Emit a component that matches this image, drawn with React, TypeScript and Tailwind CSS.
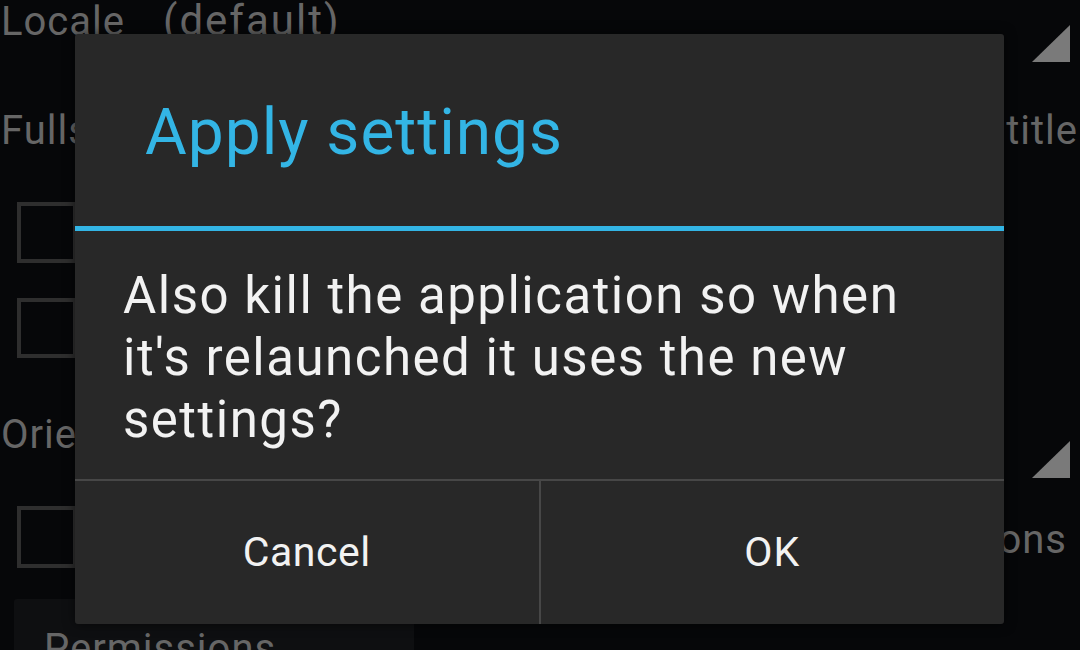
import { useState } from "react";

function Spinner({ className = "" }: { className?: string }) {
  return (
    <svg className={className} width="38" height="37" viewBox="0 0 38 37">
      <path d="M38 0V37H0z" fill="#7a7a7a" />
    </svg>
  );
}

function Box({ className = "" }: { className?: string }) {
  return <div className={`ml-[17px] w-[60px] border-[4px] border-[#2e2e2e] ${className}`} />;
}

export default function App() {
  const [open, setOpen] = useState(true);

  return (
    <div className="relative w-[1080px] h-[650px] overflow-hidden bg-[#060709] font-['Roboto','Noto_Sans',sans-serif]">
      {/* settings screen behind the dialog */}
      <div className="flex flex-col text-[40px] leading-none tracking-[1px] text-[#666666]">
        <div className="flex justify-between h-[111px]">
          <div className="flex items-baseline gap-[38px] pl-[1px]">
            <span>Locale</span>
            <span className="text-[42px] tracking-[2px]">(default)</span>
          </div>
          <Spinner className="mt-[25px] mr-[10px]" />
        </div>
        <div className="flex justify-between h-[91px]">
          <span className="pl-[1px]">Fullscreen</span>
          <span className="pr-[2px]">Hide title</span>
        </div>
        <Box className="h-[61px]" />
        <Box className="h-[60px] mt-[35px]" />
        <div className="flex justify-between mt-[57px] h-[91px]">
          <span className="pl-[1px]">Orientation</span>
          <Spinner className="mt-[26px] mr-[10px]" />
        </div>
        <div className="flex justify-between">
          <Box className="h-[62px]" />
          <span className="mt-[14px] pr-[13px]">Notifications</span>
        </div>
        <div className="ml-[14px] mt-[31px] w-[400px] rounded-[3px] bg-[#0e0f11] pt-[30px] pl-[30px]">Permissions</div>
      </div>

      {/* dialog */}
      {open && (
        <div className="absolute left-[75px] top-[34px] w-[929px] h-[590px] flex flex-col rounded-[3px] bg-[#282828] shadow-[0_0_12px_rgba(0,0,0,0.6)]">
          <div className="h-[192px] pl-[70px] pt-[67px] text-[64px] leading-none tracking-[1px] text-[#33b5e5]">Apply settings</div>
          <div className="h-[5px] bg-[#33b5e5]" />
          <div className="h-[248px] pl-[48px] pr-[58px] pt-[34px] text-[51px] leading-[62px] tracking-[1.5px] text-[#f2f2f2]">
            Also kill the application so when it's relaunched it uses the new settings?
          </div>
          <div className="h-[2px] bg-[#474747]" />
          <div className="flex flex-1">
            <button onClick={() => setOpen(false)} className="flex-1 flex items-center justify-center text-[41px] leading-none tracking-[0.5px] text-[#f2f2f2]">
              Cancel
            </button>
            <div className="w-[2px] bg-[#474747]" />
            <button onClick={() => setOpen(false)} className="flex-1 flex items-center justify-center text-[41px] leading-none tracking-[1px] text-[#f2f2f2]">
              OK
            </button>
          </div>
        </div>
      )}
    </div>
  );
}
